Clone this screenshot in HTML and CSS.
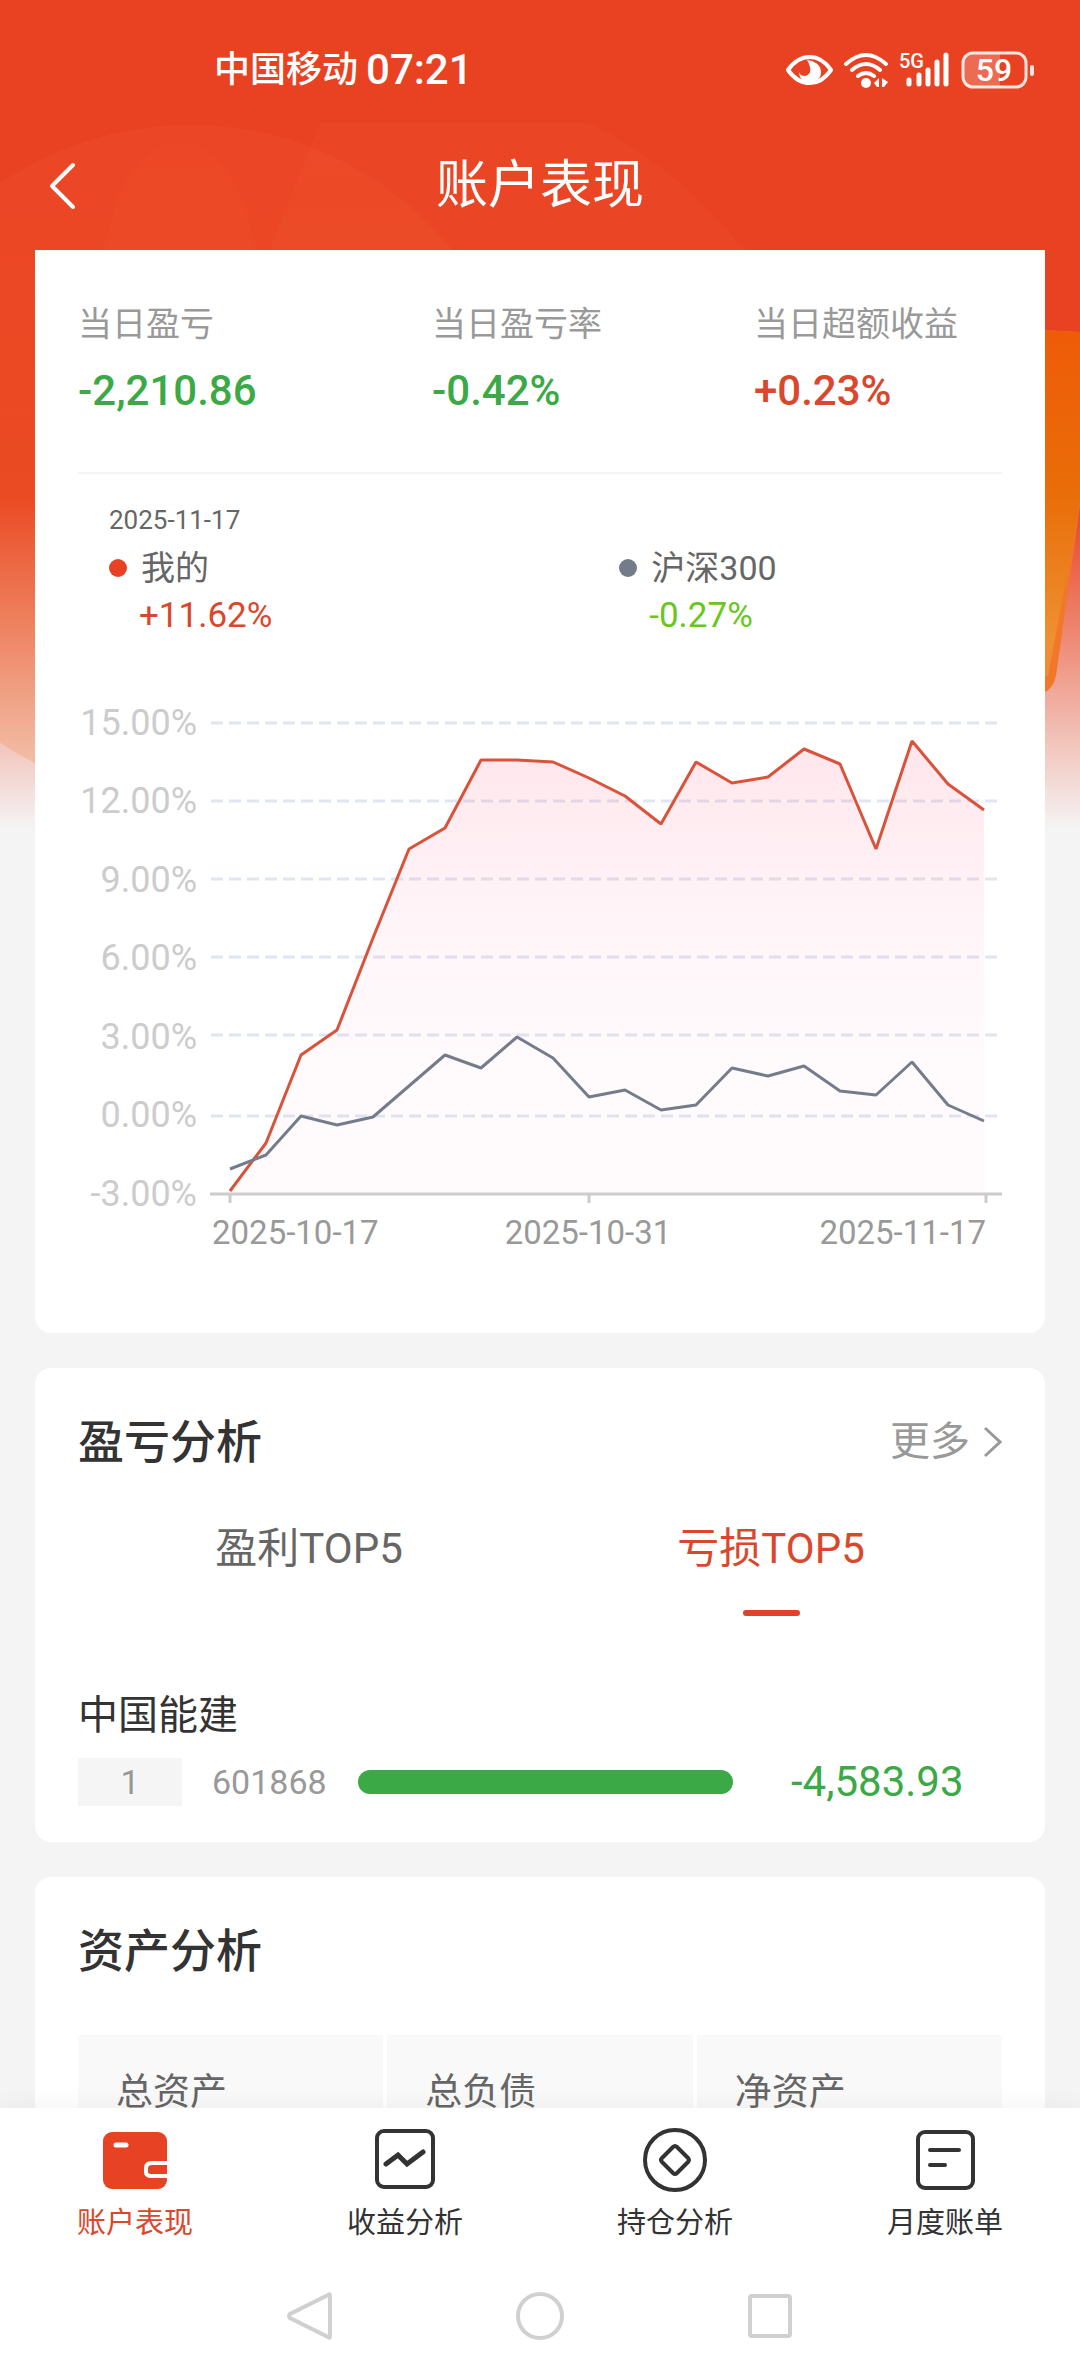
FILE: index.html
```html
<!DOCTYPE html>
<html lang="zh-CN">
<head>
<meta charset="utf-8">
<meta name="viewport" content="width=device-width, initial-scale=1">
<title>账户表现</title>
<link rel="stylesheet" href="styles.css">
</head>
<body>
<svg class="backdrop" viewBox="0 0 1080 830" preserveAspectRatio="none" aria-hidden="true">
  <defs>
    <linearGradient id="fade" gradientUnits="userSpaceOnUse" x1="0" y1="500" x2="0" y2="828">
      <stop offset="0" stop-color="#e94223"/>
      <stop offset="0.4" stop-color="#ee8670"/>
      <stop offset="1" stop-color="#f4f4f4"/>
    </linearGradient>
    <linearGradient id="disc" gradientUnits="userSpaceOnUse" x1="0" y1="125" x2="0" y2="801">
      <stop offset="0" stop-color="#ff6a40" stop-opacity="0.1"/>
      <stop offset="0.5" stop-color="#f07020" stop-opacity="0.18"/>
      <stop offset="1" stop-color="#f09050" stop-opacity="0.28"/>
    </linearGradient>
    <linearGradient id="amber" gradientUnits="userSpaceOnUse" x1="0" y1="329" x2="0" y2="692">
      <stop offset="0" stop-color="#ef5b08"/>
      <stop offset="0.45" stop-color="#e96d08"/>
      <stop offset="0.85" stop-color="#ee9030"/>
      <stop offset="1" stop-color="#f0883c"/>
    </linearGradient>
    <clipPath id="below"><rect x="0" y="123" width="1080" height="707"/></clipPath>
  </defs>
  <rect width="1080" height="830" fill="url(#fade)"/>
  <g clip-path="url(#below)">
    <path d="M320 123H589A458 458 0 0 1 744 250H270Z" fill="#ff7a40" fill-opacity="0.08"/>
    <circle cx="190" cy="463" r="338" fill="url(#disc)"/>
    <ellipse cx="180" cy="270" rx="75" ry="128" fill="#ff7a40" fill-opacity="0.05"/>
  </g>
  <path d="M1000 328L1080 332V505L1056 676Q1053 688 1045 692H1000Z" fill="#f07828"/>
  <path d="M1000 328L1080 332V505L1048 676H1000Z" fill="url(#amber)"/>
</svg>

<div class="statusbar">
  <div class="carrier"><span>中国移动</span><span class="time">07:21</span></div>
  <div class="indicators">
    <svg width="48" height="36" viewBox="0 0 48 36">
      <path d="M3 18Q12 5 25 5Q37 5 46 18Q37 31 25 31Q12 31 3 18Z" fill="none" stroke="#fff" stroke-width="4" stroke-linejoin="round"/>
      <path d="M22 8C30 9 36 13 36 20C36 27 31 30 25 30C18 30 14 26 14 20C15 23 17 24 20 24C25 23 26 19 25 15Q24 11 22 8Z" fill="#fff"/>
    </svg>
    <svg width="46" height="38" viewBox="0 0 46 38">
      <g fill="none" stroke="#fff" stroke-width="4" stroke-linecap="round">
        <path d="M3 13Q23-5 43 13M9 19Q23 7 37 19M15 25Q23 19 31 25"/>
      </g>
      <circle cx="23" cy="32" r="5" fill="#fff"/>
      <path d="M36 27V36H34L31 32ZM39 36V27L45 31L41 36Z" fill="#fff"/>
    </svg>
    <svg width="52" height="38" viewBox="0 0 52 38">
      <text x="0" y="17" class="net">5G</text>
      <path d="M10 29V33M20 24V33M29 19V33M38 11V33M47 4V33" fill="none" stroke="#fff" stroke-width="5" stroke-linecap="round"/>
    </svg>
    <svg width="75" height="38" viewBox="0 0 75 38">
      <path d="M12 2H39V36H12Q2 36 2 26V12Q2 2 12 2Z" fill="#fff" fill-opacity="0.22"/>
      <rect x="2" y="2" width="63" height="34" rx="10" fill="none" stroke="#fff" stroke-opacity="0.85" stroke-width="3"/>
      <rect x="69" y="14" width="4" height="11" rx="2" fill="#fff" fill-opacity="0.85"/>
      <text x="33" y="30" text-anchor="middle" class="charge">59</text>
    </svg>
  </div>
</div>

<header class="titlebar">
  <button class="back" type="button" aria-label="返回">
    <svg width="28" height="48" viewBox="0 0 28 48"><path d="M25 3L4 24L25 45" fill="none" stroke="#fff" stroke-width="4" stroke-linecap="round" stroke-linejoin="round"/></svg>
  </button>
  <h1>账户表现</h1>
</header>

<main class="content">
  <section class="card performance">
    <dl class="summary">
      <div><dt>当日盈亏</dt><dd class="down">-2,210.86</dd></div>
      <div><dt>当日盈亏率</dt><dd class="down">-0.42%</dd></div>
      <div><dt>当日超额收益</dt><dd class="up">+0.23%</dd></div>
    </dl>
    <div class="legend">
      <time datetime="2025-11-17">2025-11-17</time>
      <div class="series">
        <div>
          <p class="name"><i class="dot mine"></i>我的</p>
          <p class="rate up">+11.62%</p>
        </div>
        <div>
          <p class="name"><i class="dot index"></i>沪深300</p>
          <p class="rate lime">-0.27%</p>
        </div>
      </div>
    </div>
    <svg class="chart" viewBox="0 0 924 560" role="img" aria-label="收益走势">
      <defs>
        <linearGradient id="area" gradientUnits="userSpaceOnUse" x1="0" y1="50" x2="0" y2="504">
          <stop offset="0" stop-color="#ff4a70" stop-opacity="0.14"/>
          <stop offset="0.45" stop-color="#ff5090" stop-opacity="0.05"/>
          <stop offset="0.7" stop-color="#ff5090" stop-opacity="0.03"/>
          <stop offset="1" stop-color="#ff5090" stop-opacity="0.02"/>
        </linearGradient>
      </defs>
      <path class="grid" d="M133 33H920M133 111H920M133 189H920M133 267H920M133 345H920M133 426H920"/>
      <path fill="url(#area)" d="M152 501L188 453L223 365L259 340L295 248L331 159L367 138L403 70L439 70L475 72L511 88L547 106L583 134L618 72L654 93L690 87L726 59L762 74L798 159L834 51L870 94L906 120V504H152Z"/>
      <path class="axis" d="M132 504H924M152 504V513M511 504V513M908 504V513"/>
      <path class="line mine-line" d="M152 501L188 453L223 365L259 340L295 248L331 159L367 138L403 70L439 70L475 72L511 88L547 106L583 134L618 72L654 93L690 87L726 59L762 74L798 159L834 51L870 94L906 120"/>
      <path class="line index-line" d="M152 479L188 465L223 426L259 435L295 427L331 396L367 365L403 378L439 347L475 368L511 407L547 400L583 420L618 415L654 378L690 386L726 376L762 401L798 405L834 372L870 415L906 431"/>
      <g class="ylabels">
        <text x="119" y="45">15.00%</text>
        <text x="119" y="123">12.00%</text>
        <text x="119" y="202">9.00%</text>
        <text x="119" y="280">6.00%</text>
        <text x="119" y="359">3.00%</text>
        <text x="119" y="437">0.00%</text>
        <text x="119" y="516">-3.00%</text>
      </g>
      <g class="xlabels">
        <text x="134" y="554">2025-10-17</text>
        <text x="510" y="554" text-anchor="middle">2025-10-31</text>
        <text x="908" y="554" text-anchor="end">2025-11-17</text>
      </g>
    </svg>
  </section>

  <section class="card">
    <div class="heading">
      <h2>盈亏分析</h2>
      <a class="more" href="#more">更多
        <svg width="20" height="34" viewBox="0 0 20 34"><path d="M3 3L18 17L3 31" fill="none" stroke="#999" stroke-width="3"/></svg>
      </a>
    </div>
    <div class="tabs">
      <button type="button">盈利TOP5</button>
      <button type="button" class="active">亏损TOP5</button>
    </div>
    <ol class="ranking">
      <li>
        <p class="stock">中国能建</p>
        <div class="entry">
          <span class="rank">1</span>
          <span class="code">601868</span>
          <span class="track"><span class="bar" style="width:93%"></span></span>
          <span class="amount down">-4,583.93</span>
        </div>
      </li>
    </ol>
  </section>

  <section class="card">
    <div class="heading"><h2>资产分析</h2></div>
    <ul class="assets">
      <li>总资产</li>
      <li>总负债</li>
      <li>净资产</li>
    </ul>
  </section>
</main>

<footer class="bottom">
  <nav class="tabbar">
    <a href="#account" class="current">
      <svg width="64" height="64" viewBox="0 0 64 64">
        <rect x="0" y="4" width="64" height="57" rx="9" fill="#e84225"/>
        <path d="M13 17H23" stroke="#fff" stroke-width="5" stroke-linecap="round"/>
        <path d="M64 35H49Q43 35 43 40V44Q43 48 49 48H64" fill="none" stroke="#fff" stroke-width="4"/>
      </svg>
      账户表现
    </a>
    <a href="#profit">
      <svg width="64" height="64" viewBox="0 0 64 64" fill="none" stroke="#333" stroke-width="4">
        <rect x="4" y="3" width="56" height="56" rx="7"/>
        <path d="M13 36L25 27L34 36L50 24" stroke-width="5" stroke-linecap="round"/>
      </svg>
      收益分析
    </a>
    <a href="#position">
      <svg width="64" height="64" viewBox="0 0 64 64" fill="none" stroke="#333" stroke-width="4">
        <circle cx="32" cy="32" r="30"/>
        <path d="M30 19Q32 17 34 19L45 30Q47 32 45 34L34 45Q32 47 30 45L19 34Q17 32 19 30Z"/>
      </svg>
      持仓分析
    </a>
    <a href="#bill">
      <svg width="64" height="64" viewBox="0 0 64 64" fill="none" stroke="#333" stroke-width="4">
        <rect x="5" y="4" width="55" height="56" rx="7"/>
        <path d="M17 22H46M17 37H32" stroke-linecap="round"/>
      </svg>
      月度账单
    </a>
  </nav>
  <div class="sysbar">
    <button type="button" aria-label="后退"><svg width="52" height="52" viewBox="0 0 52 52"><path d="M44 5Q46 3 46 6V46Q46 49 44 47L6 28Q4 26 6 24Z"/></svg></button>
    <button type="button" aria-label="主页"><svg width="52" height="52" viewBox="0 0 52 52"><circle cx="26" cy="26" r="22"/></svg></button>
    <button type="button" aria-label="最近任务"><svg width="52" height="52" viewBox="0 0 52 52"><rect x="6" y="6" width="40" height="40" rx="2"/></svg></button>
  </div>
</footer>
</body>
</html>
```
FILE: styles.css
```css
* {
  box-sizing: border-box;
  margin: 0;
  padding: 0;
}

body {
  position: relative;
  display: flex;
  flex-direction: column;
  height: 100vh;
  overflow: hidden;
  background: #f4f4f4;
  color: #333;
  font-family: Roboto, "Noto Sans CJK SC", sans-serif;
}

svg {
  display: block;
  flex: none;
}

button {
  border: 0;
  background: none;
  color: inherit;
  font: inherit;
}

a {
  color: inherit;
  text-decoration: none;
}

ol,
ul {
  list-style: none;
}

.backdrop {
  position: absolute;
  top: 0;
  left: 0;
  z-index: -1;
  width: 100%;
  height: 830px;
}

/* status bar */

.statusbar {
  display: flex;
  align-items: center;
  justify-content: space-between;
  padding: 46px 44px 29px 214px;
  color: #fff;
}

.carrier {
  display: flex;
  align-items: center;
  gap: 8px;
  font-size: 36px;
  font-weight: 500;
  line-height: 48px;
}

.time {
  font-size: 42px;
}

.indicators {
  display: flex;
  align-items: center;
  gap: 10px;
}

.net {
  fill: #fff;
  font-size: 20px;
  font-weight: 500;
}

.charge {
  fill: #fff;
  font-size: 32px;
  font-weight: 500;
}

/* title bar */

.titlebar {
  display: grid;
  grid-template-columns: 1fr auto 1fr;
  align-items: center;
  padding: 26px 48px 27px;
  color: #fff;
}

.back {
  justify-self: start;
}

.titlebar h1 {
  font-size: 52px;
  font-weight: 400;
  line-height: 74px;
}

/* cards */

.content {
  display: flex;
  flex: 1;
  flex-direction: column;
  gap: 35px;
  min-height: 0;
  padding: 0 35px;
  overflow-y: auto;
  scrollbar-width: none;
}

.card {
  flex: none;
  padding: 41px 43px 36px;
  border-radius: 16px;
  background: #fff;
}

.performance {
  padding: 49px 43px 83px;
  border-radius: 0 0 16px 16px;
}

.up {
  color: #d9482d;
}

.down {
  color: #3ba946;
}

.lime {
  color: #69c61c;
}

.summary {
  display: grid;
  grid-template-columns: 354fr 322fr 248fr;
  padding-bottom: 51px;
  border-bottom: 2px solid #f4f4f4;
}

.summary dt {
  margin-bottom: 12px;
  color: #999;
  font-size: 34px;
  line-height: 50px;
}

.summary dd {
  font-size: 42px;
  font-weight: 500;
  line-height: 60px;
}

.legend {
  padding: 30px 0 50px 31px;
}

.legend time {
  display: block;
  margin-bottom: 8px;
  color: #666;
  font-size: 26px;
  line-height: 32px;
}

.series {
  display: grid;
  grid-template-columns: 4fr 3fr;
  color: #666;
  font-size: 34px;
  line-height: 48px;
}

.name {
  display: flex;
  align-items: center;
  gap: 14px;
}

.dot {
  width: 18px;
  height: 18px;
  border-radius: 50%;
}

.mine {
  background: #e84225;
}

.index {
  background: #747c8c;
}

.rate {
  padding-left: 30px;
  font-size: 35px;
}

.chart {
  width: 100%;
  height: auto;
}

.grid {
  fill: none;
  stroke: #e0e6f1;
  stroke-width: 3;
  stroke-dasharray: 12 6;
}

.axis {
  fill: none;
  stroke: #ccc;
  stroke-width: 3;
}

.line {
  fill: none;
  stroke-width: 3;
  stroke-linejoin: bevel;
}

.mine-line {
  stroke: #d9523a;
}

.index-line {
  stroke: #747c8c;
}

.ylabels {
  fill: #ccc;
  font-size: 36px;
  text-anchor: end;
}

.xlabels {
  fill: #999;
  font-size: 33px;
}

.heading {
  display: flex;
  align-items: center;
  justify-content: space-between;
}

.heading h2 {
  font-size: 46px;
  font-weight: 500;
  line-height: 66px;
}

.more {
  display: flex;
  align-items: center;
  gap: 12px;
  color: #999;
  font-size: 40px;
  line-height: 60px;
}

.tabs {
  display: grid;
  grid-template-columns: 1fr 1fr;
  margin-top: 44px;
  color: #666;
  font-size: 42px;
  line-height: 60px;
}

.tabs button::after {
  display: block;
  width: 57px;
  height: 6px;
  margin: 31px auto 0;
  border-radius: 3px;
  content: "";
}

.tabs .active {
  color: #d9482d;
}

.tabs .active::after {
  background: #e04427;
}

.ranking {
  margin-top: 72px;
}

.stock {
  margin-bottom: 14px;
  font-size: 40px;
  line-height: 56px;
}

.entry {
  display: grid;
  grid-template-columns: 104px 116px 1fr 211px;
  gap: 30px;
  align-items: center;
  color: #999;
  font-size: 34px;
  line-height: 48px;
}

.rank {
  background: #f5f5f5;
  text-align: center;
}

.bar {
  display: block;
  height: 24px;
  border-radius: 12px;
  background: #3ba946;
}

.amount {
  font-size: 42px;
}

.assets {
  display: grid;
  grid-template-columns: repeat(3, 1fr);
  gap: 4px;
  margin-top: 51px;
}

.assets li {
  padding: 34px 38px 32px;
  background: #f9f9f9;
  color: #666;
  font-size: 37px;
  line-height: 48px;
}

/* bottom bars */

.bottom {
  z-index: 1;
  background: #fff;
  box-shadow: 0 0 24px rgba(0, 0, 0, 0.06);
}

.tabbar {
  display: grid;
  grid-template-columns: repeat(4, 1fr);
  padding-top: 20px;
}

.tabbar a {
  display: flex;
  flex-direction: column;
  align-items: center;
  gap: 11px;
  font-size: 29px;
  line-height: 40px;
}

.tabbar .current {
  color: #d9482d;
}

.sysbar {
  display: flex;
  justify-content: center;
  gap: 178px;
  padding: 47px 0 34px;
}

.sysbar svg {
  fill: none;
  stroke: #d0d0d0;
  stroke-width: 4;
}
```
